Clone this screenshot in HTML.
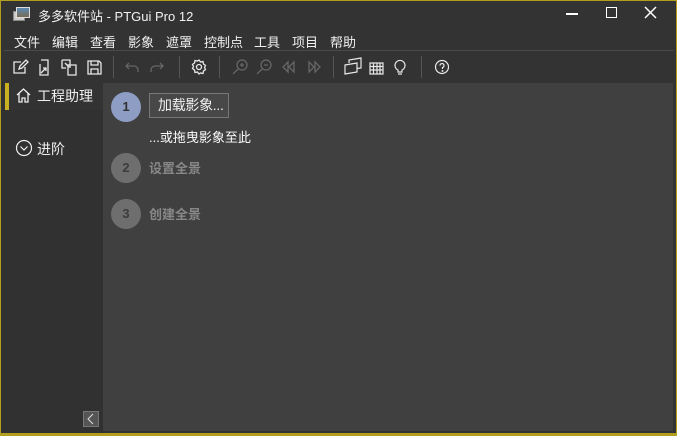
<!DOCTYPE html>
<html><head><meta charset="utf-8"><style>
*{margin:0;padding:0;box-sizing:border-box}
body{width:677px;height:436px;overflow:hidden;background:#333;font-family:"Liberation Sans","Noto Sans CJK SC",sans-serif;color:#eee;position:relative}
.b{position:absolute;background:#b39d1f}
.a{position:absolute}
.menu span{position:absolute;top:32px;font-size:13px;color:#f0f0f0}
svg{position:absolute}
.t{position:absolute;font-size:13px}
</style></head><body>
<div class="b" style="left:0;top:0;width:677px;height:1px"></div>
<div class="b" style="left:0;top:0;width:1px;height:436px"></div>
<div class="b" style="left:676px;top:0;width:1px;height:436px"></div>
<div class="b" style="left:0;top:433px;width:677px;height:3px"></div>
<div class="a" style="left:13px;top:11px;width:12px;height:10px;background:#ccc;border:1px solid #888"></div>
<div class="a" style="left:16px;top:7px;width:14px;height:11px;background:linear-gradient(#5a8ab8,#7a6a50);border:1px solid #ddd"></div>
<div class="t" style="left:38px;top:6px;font-size:13px;color:#f2f2f2">多多软件站 - PTGui Pro 12</div>
<div class="a" style="left:566px;top:13px;width:12px;height:1.5px;background:#fff"></div>
<div class="a" style="left:606px;top:7px;width:11px;height:11px;border:1.5px solid #fff"></div>
<svg style="left:644px;top:6px" width="13" height="13"><path d="M1 1L12 12M12 1L1 12" stroke="#fff" stroke-width="1.5"/></svg>
<div class="menu">
<span style="left:14px">文件</span><span style="left:52px">编辑</span><span style="left:90px">查看</span><span style="left:128px">影象</span><span style="left:166px">遮罩</span><span style="left:204px">控制点</span><span style="left:254px">工具</span><span style="left:292px">项目</span><span style="left:330px">帮助</span>
</div>
<div class="a" style="left:4px;top:50px;width:670px;height:1px;background:#4a4a4a"></div>
<svg style="left:12px;top:58px" width="100" height="18" fill="none" stroke="#e8e8e8" stroke-width="1.3">
<path d="M9 4H2v11h11V9"/><path d="M7 11l1-3 6-6 2 2-6 6z"/>
<path d="M29 2h7v15h-8V6"/><path d="M29 15l5-5M31 10h3v3"/>
<path d="M50 2h8v8M50 2v8h4M56 7h8v10h-8z"/><path d="M53 5l4 4"/>
<path d="M76 3h11l2 2v11H76z"/><path d="M79 3v4h7V3M79 16v-5h7v5"/>
</svg>
<div class="a" style="left:113px;top:56px;width:1px;height:22px;background:#555"></div>
<svg style="left:124px;top:58px" width="45" height="18" fill="none" stroke="#666" stroke-width="1.3">
<path d="M5 5L2 8l3 3M2 8h8a4 4 0 0 1 4 4v2"/><path d="M36 5l3 3-3 3M39 8h-8a4 4 0 0 0-4 4v2"/></svg>
<div class="a" style="left:179px;top:56px;width:1px;height:22px;background:#555"></div>
<svg style="left:190px;top:58px" width="18" height="18" fill="none" stroke="#e8e8e8" stroke-width="1.3"><circle cx="9" cy="9" r="2.5"/><path d="M9 2l1.5 2 2.5-.5.5 2.5 2 1.5-1 2 1 2-2 1.5-.5 2.5-2.5-.5L9 16l-1.5-2-2.5.5-.5-2.5-2-1.5 1-2-1-2 2-1.5.5-2.5 2.5.5z"/></svg>
<div class="a" style="left:219px;top:56px;width:1px;height:22px;background:#555"></div>
<svg style="left:230px;top:58px" width="95" height="18" fill="none" stroke="#666" stroke-width="1.3">
<circle cx="12" cy="7" r="5"/><path d="M8 11l-5 5M10 7h4M12 5v4"/>
<circle cx="36" cy="7" r="5"/><path d="M32 11l-5 5M34 7h4"/>
<path d="M58 4l-5 5 5 5zM64 4l-5 5 5 5z"/><path d="M79 4l5 5-5 5zM85 4l5 5-5 5z"/></svg>
<div class="a" style="left:333px;top:56px;width:1px;height:22px;background:#555"></div>
<svg style="left:343px;top:57px" width="75" height="20" fill="none" stroke="#e8e8e8" stroke-width="1.2">
<path d="M2 8l12-2v9l-12 2zM6 6V3l12-2v10l-4 .5"/>
<path d="M27 6h13v11H27zM27 9.5h13M27 13h13M30.5 6v11M34 6v11M37 6v11"/>
<path d="M55 17h4M55 15v-2a5 5 0 1 1 4 0v2z"/></svg>
<div class="a" style="left:421px;top:56px;width:1px;height:22px;background:#555"></div>
<svg style="left:434px;top:59px" width="16" height="16" fill="none" stroke="#e8e8e8" stroke-width="1.2"><circle cx="8" cy="8" r="6.5"/><path d="M6 6.5a2 2 0 1 1 2.5 2V10"/><circle cx="8.5" cy="12" r=".4"/></svg>
<div class="a" style="left:1px;top:83px;width:102px;height:350px;background:#313131"></div>
<div class="a" style="left:1px;top:83px;width:102px;height:27px;background:#333"></div>
<div class="a" style="left:5px;top:83px;width:4px;height:27px;background:#c8b020"></div>
<svg style="left:15px;top:87px" width="17" height="17" fill="none" stroke="#eee" stroke-width="1.3"><path d="M2 8L8.5 2 15 8M4 6.5V15h3v-4h3v4h3V6.5"/></svg>
<div class="t" style="left:37px;top:86px;font-size:14px">工程助理</div>
<svg style="left:15px;top:139px" width="18" height="18" fill="none" stroke="#eee" stroke-width="1.2"><circle cx="9" cy="9" r="7.5"/><path d="M5.5 7.5L9 11l3.5-3.5"/></svg>
<div class="t" style="left:37px;top:139px;font-size:14px">进阶</div>
<div class="a" style="left:83px;top:411px;width:16px;height:16px;background:#555;border:1px solid #777"></div>
<svg style="left:83px;top:411px" width="16" height="16" fill="none" stroke="#ddd" stroke-width="1"><path d="M10 3L5 8l5 5"/></svg>
<div class="a" style="left:103px;top:83px;width:570px;height:348px;background:#404040"></div>
<div class="a" style="left:111px;top:92px;width:30px;height:30px;border-radius:50%;background:#8e9dc4;color:#333;font-size:13px;font-weight:bold;text-align:center;line-height:30px">1</div>
<div class="a" style="left:149px;top:93px;width:80px;height:25px;border:1px solid #777;background:#484848;font-size:14px;line-height:23px;padding-left:8px;color:#f0f0f0;letter-spacing:-0.3px">加载影象...</div>
<div class="t" style="left:149px;top:127px;font-size:13px;color:#fafafa">...或拖曳影象至此</div>
<div class="a" style="left:111px;top:153px;width:30px;height:30px;border-radius:50%;background:#6e6e6e;color:#3c3c3c;font-size:13px;font-weight:bold;text-align:center;line-height:30px">2</div>
<div class="t" style="left:149px;top:158px;font-size:13px;color:#888;font-weight:bold">设置全景</div>
<div class="a" style="left:111px;top:199px;width:30px;height:30px;border-radius:50%;background:#6e6e6e;color:#3c3c3c;font-size:13px;font-weight:bold;text-align:center;line-height:30px">3</div>
<div class="t" style="left:149px;top:204px;font-size:13px;color:#888;font-weight:bold">创建全景</div>
</body></html>
